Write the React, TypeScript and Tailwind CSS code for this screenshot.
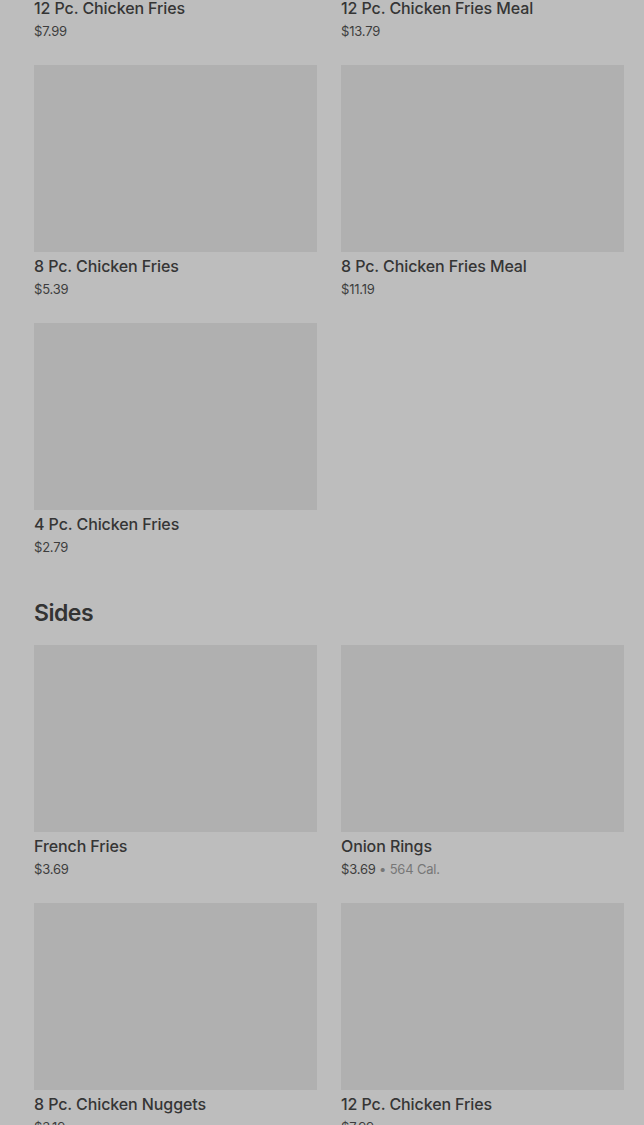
type Item = { name: string; price: string; cal?: string };

const fries: Item[] = [
  { name: "12 Pc. Chicken Fries", price: "$7.99" },
  { name: "12 Pc. Chicken Fries Meal", price: "$13.79" },
  { name: "8 Pc. Chicken Fries", price: "$5.39" },
  { name: "8 Pc. Chicken Fries Meal", price: "$11.19" },
  { name: "4 Pc. Chicken Fries", price: "$2.79" },
];

const sides: Item[] = [
  { name: "French Fries", price: "$3.69" },
  { name: "Onion Rings", price: "$3.69", cal: "564 Cal." },
  { name: "8 Pc. Chicken Nuggets", price: "$3.19" },
  { name: "12 Pc. Chicken Fries", price: "$7.99" },
];

const MenuCard = ({ item }: { item: Item }) => (
  <div className="flex flex-col">
    <div className="h-[187px] w-full bg-[#b0b0b0]" />
    <div className="mt-[4px] text-[16px] font-medium leading-[20px] tracking-[-0.1px] text-[#353535]">
      {item.name}
    </div>
    <div className="mt-[3px] text-[13px] leading-[20px] tracking-[-0.2px] text-[#3d3d3d]">
      {item.price}
      {item.cal && (
        <span className="text-[#777777]">
          {" "}
          • {item.cal}
        </span>
      )}
    </div>
  </div>
);

const App = () => {
  return (
    <div
      className="h-[1125px] overflow-hidden bg-[#bdbdbd] pl-[34px] pr-[20px]"
      style={{ fontFamily: "Inter, 'Noto Sans', sans-serif" }}
    >
      <div className="-mt-[193px] grid grid-cols-2 gap-x-[24px] gap-y-[24px]">
        {fries.map((item, i) => (
          <MenuCard key={i} item={item} />
        ))}
      </div>

      <h2 className="mt-[40px] mb-[16px] text-[23px] font-semibold leading-[32px] tracking-[-0.5px] text-[#333333]">
        Sides
      </h2>

      <div className="grid grid-cols-2 gap-x-[24px] gap-y-[24px]">
        {sides.map((item, i) => (
          <MenuCard key={i} item={item} />
        ))}
      </div>
    </div>
  );
};

export default App;
